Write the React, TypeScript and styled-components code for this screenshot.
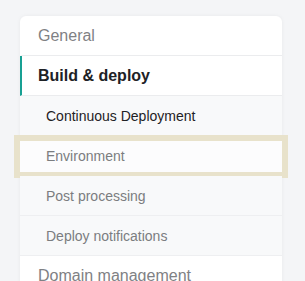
import React from 'react';
import styled, { createGlobalStyle } from 'styled-components';

const GlobalStyle = createGlobalStyle`
  body {
    margin: 0;
    background: #f4f5f7;
    font-family: "Liberation Sans", Arial, sans-serif;
  }
`;

const Page = styled.div`
  padding: 16px 23px 0 20px;
  height: 281px;
  box-sizing: border-box;
  overflow: hidden;
`;

const Card = styled.ul`
  list-style: none;
  margin: 0;
  padding: 0;
  background: #fff;
  border-radius: 6px 6px 0 0;
  box-shadow: 0 0 4px rgba(0, 0, 0, 0.05);
`;

const MainItem = styled.li<{ $active?: boolean }>`
  height: 39px;
  display: flex;
  align-items: center;
  padding-left: 16px;
  border-bottom: 1px solid #ebecee;
  border-left: 2px solid ${(p) => (p.$active ? '#18a093' : 'transparent')};
  font-size: 16px;
  font-weight: ${(p) => (p.$active ? 700 : 400)};
  color: ${(p) => (p.$active ? '#1e2226' : '#7f8184')};
`;

const SubItem = styled.li<{ $current?: boolean; $focused?: boolean }>`
  position: relative;
  height: 39px;
  display: flex;
  align-items: center;
  padding-left: 26px;
  background: ${(p) => (p.$focused ? '#fcfcfd' : '#f8f9fa')};
  border-bottom: 1px solid ${(p) => (p.$focused ? 'transparent' : '#eeeff1')};
  font-size: 14px;
  color: ${(p) => (p.$current ? '#1f2225' : '#7b7d80')};

  ${(p) =>
    p.$focused &&
    `
    &::after {
      content: '';
      position: absolute;
      top: -1px;
      bottom: -3px;
      left: -6px;
      right: -6px;
      border: 6px solid #e8e2cb;
      pointer-events: none;
    }
  `}
`;

const subItems = ['Continuous Deployment', 'Environment', 'Post processing', 'Deploy notifications'];

export default function App() {
  return (
    <>
      <GlobalStyle />
      <Page>
        <Card>
          <MainItem>General</MainItem>
          <MainItem $active>Build &amp; deploy</MainItem>
          {subItems.map((item, i) => (
            <SubItem key={item} $current={i === 0} $focused={item === 'Environment'}>
              {item}
            </SubItem>
          ))}
          <MainItem>Domain management</MainItem>
        </Card>
      </Page>
    </>
  );
}
